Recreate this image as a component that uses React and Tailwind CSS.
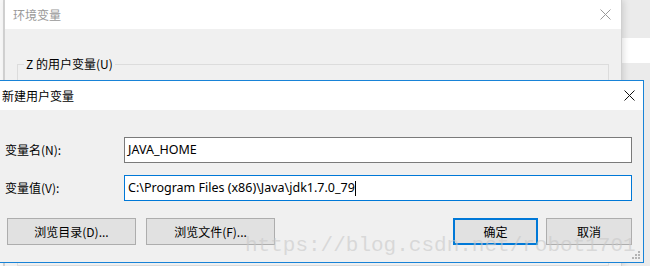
import React from 'react';

const cjk = { fontFamily: '"Noto Sans CJK SC", "Noto Sans", sans-serif' };
const latin = { fontFamily: '"Noto Sans", "Noto Sans CJK SC", sans-serif' };

const CloseIcon = ({ color }) => (
  <svg width="11" height="11" viewBox="0 0 11 11">
    <path d="M0.5 0.5 L10.5 10.5 M10.5 0.5 L0.5 10.5" stroke={color} strokeWidth="1" />
  </svg>
);

const Grip = () => (
  <svg width="9" height="9" viewBox="0 0 9 9" className="absolute right-[2px] bottom-[2px]">
    <rect x="6" y="0" width="2" height="2" fill="#b4b4b4" />
    <rect x="3" y="3" width="2" height="2" fill="#b4b4b4" />
    <rect x="6" y="3" width="2" height="2" fill="#b4b4b4" />
    <rect x="0" y="6" width="2" height="2" fill="#b4b4b4" />
    <rect x="3" y="6" width="2" height="2" fill="#b4b4b4" />
    <rect x="6" y="6" width="2" height="2" fill="#b4b4b4" />
  </svg>
);

const Button = ({ children, primary, className = '' }) => (
  <button
    className={`h-[27px] bg-[#e1e1e1] text-[12px] text-black flex items-center justify-center ${
      primary ? 'border-2 border-[#0078d7]' : 'border border-[#adadad]'
    } ${className}`}
    style={cjk}
  >
    {children}
  </button>
);

const Field = ({ label, value, focused }) => (
  <div className="flex items-center">
    <div className="w-[119px] text-[12px] text-black" style={cjk}>{label}</div>
    <div
      className={`w-[508px] h-[26px] bg-white border flex items-center pl-[3px] text-[12.5px] text-black ${
        focused ? 'border-[#0078d7]' : 'border-[#7a7a7a]'
      }`}
      style={latin}
    >
      <span>{value}</span>
      {focused && <span className="w-px h-[15px] bg-black" />}
    </div>
  </div>
);

export default function App() {
  return (
    <div className="relative w-[650px] h-[266px] overflow-hidden bg-[#ececec]">
      {/* window behind, left edge */}
      <div className="absolute left-0 top-0 w-[4px] h-full bg-[#f7f7f7] border-r border-[#d4d4d4]" />

      {/* strip right of background window */}
      <div className="absolute left-[622px] top-0 w-[28px] h-full flex flex-col bg-[#ebebeb]">
        <div className="h-[38px]" />
        <div className="h-[25px] bg-white" />
      </div>

      {/* background window: 环境变量 */}
      <div className="absolute left-[4px] top-0 w-[618px] h-[266px] flex flex-col bg-[#f0f0f0] border-x border-[#d0d0d0] shadow-[2px_0_6px_rgba(0,0,0,0.12)]">
        <div className="h-[29px] bg-white flex items-center justify-between pl-[8px] pr-[10px]">
          <span className="text-[12px] text-[#999999]" style={cjk}>环境变量</span>
          <CloseIcon color="#9a9a9a" />
        </div>
        <fieldset className="mt-[27px] ml-[12px] mr-[12px] flex-1 border border-[#dcdcdc]">
          <legend className="ml-[6px] px-[2px] text-[12px] text-black leading-[16px]" style={cjk}>
            Z 的用户变量(U)
          </legend>
        </fieldset>
      </div>

      {/* front dialog: 新建用户变量 */}
      <div className="absolute left-[-1px] top-[80px] w-[645px] h-[183px] flex flex-col border border-[#1883d7] bg-[#f0f0f0]">
        <div className="h-[29px] bg-white flex items-center justify-between pl-[2px] pr-[8px]">
          <span className="text-[12px] text-black" style={cjk}>新建用户变量</span>
          <CloseIcon color="#111111" />
        </div>
        <div className="relative flex-1 flex flex-col pl-[5px] pt-[27px]">
          <Field label="变量名(N):" value="JAVA_HOME" />
          <div className="h-[12px]" />
          <Field label="变量值(V):" value="C:\Program Files (x86)\Java\jdk1.7.0_79" focused />
          <div className="flex mt-[17px] pl-[2px]">
            <Button className="w-[129px]">浏览目录(D)...</Button>
            <Button className="w-[129px] ml-[10px]">浏览文件(F)...</Button>
            <Button primary className="w-[85px] ml-[178px]">确定</Button>
            <Button className="w-[86px] ml-[8px]">取消</Button>
          </div>
          <Grip />
        </div>
      </div>

      {/* watermark */}
      <div
        className="absolute left-[245px] top-[232px] text-[21px] leading-[28px] text-[#c8c8c8]/60 pointer-events-none whitespace-nowrap"
        style={{ fontFamily: '"Liberation Mono", "DejaVu Sans Mono", monospace' }}
      >
        https://blog.csdn.net/robot1701
      </div>
    </div>
  );
}
